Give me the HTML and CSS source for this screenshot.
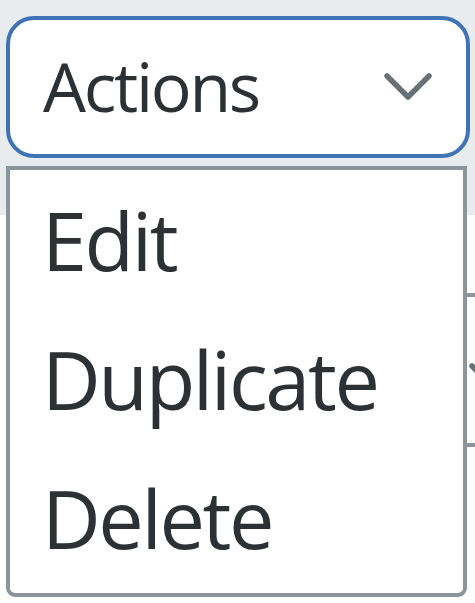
FILE: index.html
```html
<!DOCTYPE html>
<html lang="en">
<head>
<meta charset="utf-8">
<title>Actions</title>
<link rel="stylesheet" href="styles.css">
</head>
<body>
<header class="toolbar">
  <button class="select-btn" type="button">
    <span class="select-label">Actions</span>
    <svg class="chevron" width="48" height="30" viewBox="0 0 48 30" aria-hidden="true">
      <polyline points="3,4 24,25 45,4" fill="none" stroke="#687276" stroke-width="5.5" stroke-linecap="round" stroke-linejoin="round"/>
    </svg>
  </button>
</header>
<main class="content">
  <div class="select-behind">
    <svg class="chevron-behind" width="48" height="30" viewBox="0 0 48 30" aria-hidden="true">
      <polyline points="3,4 24,25 45,4" fill="none" stroke="#687276" stroke-width="5.5" stroke-linecap="round" stroke-linejoin="round"/>
    </svg>
  </div>
</main>
<ul class="menu">
  <li class="menu-item">Edit</li>
  <li class="menu-item">Duplicate</li>
  <li class="menu-item">Delete</li>
</ul>
</body>
</html>
```

FILE: styles.css
```css
html, body {
  margin: 0;
  padding: 0;
  overflow: hidden;
  background: #ffffff;
  font-family: "Open Sans", "Noto Sans", sans-serif;
  color: #2d3134;
}

.toolbar {
  background: #e9ecef;
  height: 215px;
  padding: 16px 5px 0 6px;
  box-sizing: border-box;
}

.select-btn {
  display: flex;
  align-items: center;
  justify-content: space-between;
  width: 100%;
  height: 142px;
  box-sizing: border-box;
  border: 4px solid #3e74b6;
  border-radius: 28px;
  background: #ffffff;
  padding: 0 34px 0 33px;
  margin: 0;
  font-family: inherit;
  color: inherit;
}

.select-label {
  font-size: 68px;
  line-height: 1;
  letter-spacing: -2.3px;
  padding-bottom: 3px;
}

.chevron {
  display: block;
}

.content {
  padding-top: 78px;
  width: 800px;
}

.select-behind {
  margin-left: 300px;
  width: 400px;
  height: 154px;
  box-sizing: border-box;
  border: 4px solid #8c9599;
  border-radius: 28px;
  display: flex;
  align-items: center;
  padding-left: 165px;
  padding-top: 14px;
}

.chevron-behind {
  display: block;
}

.menu {
  position: absolute;
  top: 166px;
  left: 6px;
  width: 461px;
  height: 431px;
  box-sizing: border-box;
  margin: 0;
  padding: 0 0 6px;
  list-style: none;
  background: #ffffff;
  border: 4px solid #8c9599;
  border-radius: 0 0 9px 9px;
}

.menu-item {
  font-size: 81px;
  line-height: 139px;
  letter-spacing: -2.4px;
  padding-left: 32px;
  white-space: nowrap;
}
```
